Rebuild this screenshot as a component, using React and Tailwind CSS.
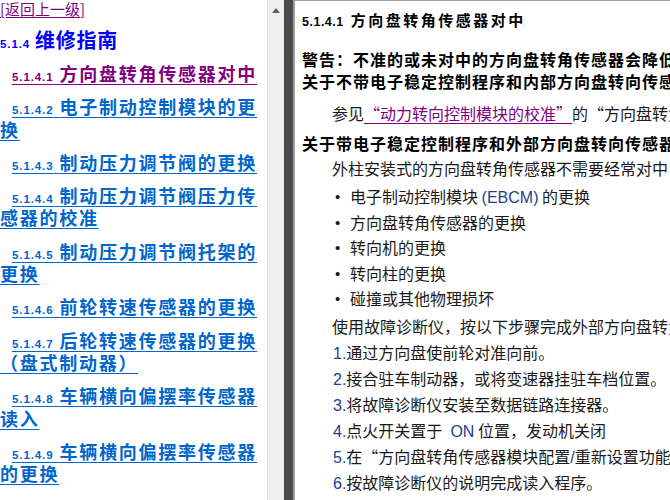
import React from "react";

const CJK = { fontFamily: '"Noto Sans CJK SC", "Noto Sans", sans-serif' };
const NUM = { fontFamily: '"Liberation Sans", Arial, sans-serif' };

const items = [
  { n: "5.1.4.1", lines: ["方向盘转角传感器对中"], visited: true },
  { n: "5.1.4.2", lines: ["电子制动控制模块的更", "换"] },
  { n: "5.1.4.3", lines: ["制动压力调节阀的更换"] },
  { n: "5.1.4.4", lines: ["制动压力调节阀压力传", "感器的校准"] },
  { n: "5.1.4.5", lines: ["制动压力调节阀托架的", "更换"] },
  { n: "5.1.4.6", lines: ["前轮转速传感器的更换"] },
  { n: "5.1.4.7", lines: ["后轮转速传感器的更换", "（盘式制动器）"] },
  { n: "5.1.4.8", lines: ["车辆横向偏摆率传感器", "读入"] },
  { n: "5.1.4.9", lines: ["车辆横向偏摆率传感器", "的更换"] },
];

function NavItem({ item }) {
  return (
    <p className="mt-[11px] whitespace-nowrap indent-[12px] text-[18px] font-bold leading-[22.3px]">
      <a
        href="#"
        className={
          "underline decoration-1 underline-offset-[3px] " +
          (item.visited ? "text-[#800080]" : "text-[#0066cc]")
        }
      >
        <span style={NUM} className="text-[11.5px] font-bold leading-none tracking-[0.9px] [word-spacing:2px]">
          {item.n}{" "}
        </span>
        {item.lines.map((l, i) => (
          <React.Fragment key={i}>
            {i > 0 && <br />}
            <span className="tracking-[1.75px]">{l}</span>
          </React.Fragment>
        ))}
      </a>
    </p>
  );
}

const B = "text-[#23408e] leading-none";

export default function App() {
  return (
    <div className="flex h-[500px] w-[670px] overflow-hidden bg-white" style={CJK}>
      {/* left pane */}
      <div className="h-full w-[267px] shrink-0 overflow-hidden bg-white">
        <div className="text-[15px] leading-[17px] whitespace-nowrap">
          <a href="#" className="text-[#800080] underline decoration-1 underline-offset-[2px]">
            [返回上一级]
          </a>
        </div>
        <div className="mt-[10px] text-[20px] font-bold leading-[26px] whitespace-nowrap text-[#0000ff]">
          <span style={NUM} className="text-[11.5px] font-bold leading-none tracking-[0.9px]">5.1.4</span>
          <span className="ml-[5px] tracking-[0.75px]">维修指南</span>
        </div>
        <div className="-mt-[2px]">
          {items.map((it) => (
            <NavItem key={it.n} item={it} />
          ))}
        </div>
      </div>

      {/* scrollbar */}
      <div className="flex h-full w-[17px] shrink-0 justify-center border-l border-[#e2e2e2] border-r border-r-[#e8e8e8] bg-[#f0f0f0] pt-[8px]">
        <svg width="8" height="5" viewBox="0 0 8 5">
          <polygon points="4,0 8,5 0,5" fill="#606060" />
        </svg>
      </div>

      {/* splitter */}
      <div className="h-full w-[9px] shrink-0 bg-[#4b4b4b]" />
      <div className="h-full w-[2px] shrink-0 bg-[#a0a0a0]" />

      {/* right pane */}
      <div className="h-full flex-1 overflow-hidden border-t border-[#a0a0a0] bg-white pl-[7px] text-[16px] text-[#1a1a1a]">
        <div className="mt-[9px] whitespace-nowrap text-[15px] font-bold leading-[20px] text-black">
          <span style={NUM} className="text-[12.5px] font-bold leading-none tracking-[0.5px]">5.1.4.1</span>
          <span className="ml-[7px] tracking-[2.5px]">方向盘转角传感器对中</span>
        </div>
        <div className="mt-[18px] whitespace-nowrap font-bold leading-[22px] tracking-[1px] text-black">
          警告：不准的或未对中的方向盘转角传感器会降低电子稳定控制系统的性能。
        </div>
        <div className="whitespace-nowrap font-bold leading-[22px] tracking-[1px] text-black">
          关于不带电子稳定控制程序和内部方向盘转向传感器的车辆
        </div>
        <div className="mt-[9px] whitespace-nowrap pl-[30px] leading-[24px]">
          参见
          <a href="#" className="text-[#800080] underline decoration-1 underline-offset-[3px]">
            “动力转向控制模块的校准”
          </a>
          的“方向盘转角传感器对中”
        </div>
        <div className="mt-[7px] whitespace-nowrap font-bold leading-[22px] tracking-[1px] text-black">
          关于带电子稳定控制程序和外部方向盘转向传感器的车辆
        </div>
        <div className="mt-[2px] whitespace-nowrap pl-[30px] leading-[24px]">
          外柱安装式的方向盘转角传感器不需要经常对中
        </div>
        <ul className="mt-[4px]">
          {[
            <>电子制动控制模块 <span style={NUM} className={B}>(EBCM)</span> 的更换</>,
            "方向盘转角传感器的更换",
            "转向机的更换",
            "转向柱的更换",
            "碰撞或其他物理损坏",
          ].map((t, i) => (
            <li key={i} className="flex items-center whitespace-nowrap pl-[33px] leading-[25.5px]">
              <span style={NUM} className="w-[15px] shrink-0 text-[15px] leading-none">•</span>
              <span>{t}</span>
            </li>
          ))}
        </ul>
        <div className="mt-[1px] whitespace-nowrap pl-[30px] leading-[26px]">
          使用故障诊断仪，按以下步骤完成外部方向盘转角传感器的读入程序：
        </div>
        <ol>
          {[
            ["1.", "通过方向盘使前轮对准向前。"],
            ["2.", "接合驻车制动器，或将变速器挂驻车档位置。"],
            ["3.", "将故障诊断仪安装至数据链路连接器。"],
            ["4.", <>点火开关置于 <span style={NUM} className={B}>&nbsp;ON</span> 位置，发动机关闭</>],
            ["5.", <>在“方向盘转角传感器模块配置<span style={NUM} className={B}>/</span>重新设置功能”</>],
            ["6.", "按故障诊断仪的说明完成读入程序。"],
          ].map(([n, t], i) => (
            <li key={i} className="whitespace-nowrap pl-[31px] leading-[26px]">
              <span style={NUM} className={B}>{n}</span>
              {t}
            </li>
          ))}
        </ol>
      </div>
    </div>
  );
}
